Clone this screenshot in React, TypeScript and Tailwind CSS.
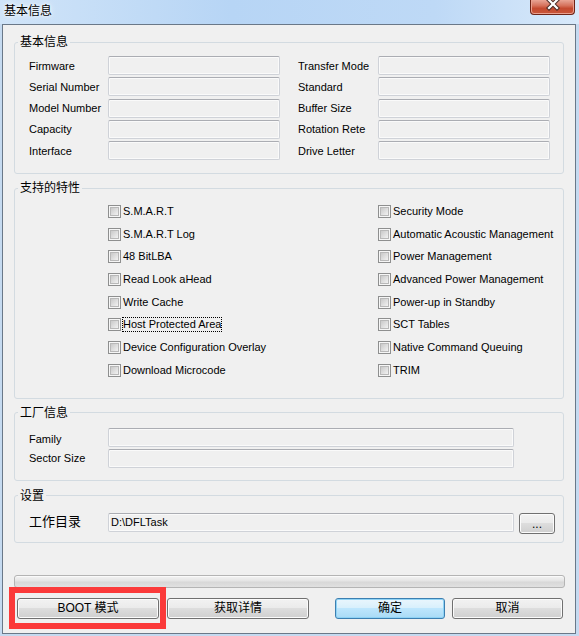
import { ReactNode } from "react";

const leftInfo = ["Firmware", "Serial Number", "Model Number", "Capacity", "Interface"];
const rightInfo = ["Transfer Mode", "Standard", "Buffer Size", "Rotation Rete", "Drive Letter"];

const leftFeatures = [
  "S.M.A.R.T",
  "S.M.A.R.T Log",
  "48 BitLBA",
  "Read Look aHead",
  "Write Cache",
  "Host Protected Area",
  "Device Configuration Overlay",
  "Download Microcode",
];

const rightFeatures = [
  "Security Mode",
  "Automatic Acoustic Management",
  "Power Management",
  "Advanced Power Management",
  "Power-up in Standby",
  "SCT Tables",
  "Native Command Queuing",
  "TRIM",
];

function TextBox({ className = "", value = "" }: { className?: string; value?: string }) {
  return (
    <div
      className={
        "flex h-[19px] items-center rounded-[2px] border border-[#cfd2d8] border-t-[#abadb3] bg-[#f0f0f0] pl-[2px] text-[11px] leading-[13px] shadow-[inset_0_0_0_1px_#fafafa] " +
        className
      }
    >
      {value}
    </div>
  );
}

function CheckItem({ label, focused = false }: { label: string; focused?: boolean }) {
  return (
    <div className="flex h-[13px] items-center">
      <span className="flex h-[13px] w-[13px] shrink-0 items-center justify-center border border-[#8e8f8f] bg-[#f6f6f6]">
        <span className="h-[9px] w-[9px] border border-[#b8b8b8] bg-[linear-gradient(135deg,#c9c9c9,#f2f2f2)]" />
      </span>
      <span
        className={
          "ml-[2px] whitespace-nowrap text-[11px] leading-[13px] " +
          (focused ? "outline-1 outline-dotted outline-black" : "")
        }
      >
        {label}
      </span>
    </div>
  );
}

// Win7 style group box; padding goes on the inner div so the legend stays put
function Group({
  title,
  className = "",
  innerClassName = "",
  children,
}: {
  title: string;
  className?: string;
  innerClassName?: string;
  children: ReactNode;
}) {
  return (
    <fieldset className={"rounded-[3px] border border-[#d3dbe1] p-0 " + className}>
      <legend className="ml-[3px] px-[2px] text-[12px] leading-[16px]">{title}</legend>
      <div className={innerClassName}>{children}</div>
    </fieldset>
  );
}

function WinButton({
  children,
  className = "",
  primary = false,
}: {
  children: ReactNode;
  className?: string;
  primary?: boolean;
}) {
  const look = primary
    ? "border-[#3c7fb1] bg-[linear-gradient(#eaf6fd_0%,#d9f0fc_45%,#bee6fd_50%,#a9dbf6_100%)] shadow-[inset_0_0_0_1px_#8fd3f5]"
    : "border-[#707070] bg-[linear-gradient(#f2f2f2_0%,#ebebeb_45%,#dddddd_50%,#cfcfcf_100%)] shadow-[inset_0_0_0_1px_#fbfbfb]";
  return (
    <button
      type="button"
      className={
        "flex h-[21px] items-center justify-center rounded-[3px] border text-[12px] leading-[14px] text-black " +
        look +
        " " +
        className
      }
    >
      {children}
    </button>
  );
}

function CloseButton() {
  return (
    <div className="mr-[4px] flex h-[15px] w-[45px] items-start justify-center overflow-hidden rounded-b-[4px] border border-t-0 border-[#6e2417] bg-[linear-gradient(#e7a596_0%,#d6725c_40%,#c44a30_60%,#c9563a_100%)] shadow-[inset_0_0_0_1px_#e9a08f]">
      <svg width="16" height="14" viewBox="0 0 16 14" className="-mt-[3px]">
        <path d="M4 3 L12 11 M12 3 L4 11" stroke="#4a2a25" strokeWidth="4.2" strokeLinecap="square" fill="none" />
        <path d="M4 3 L12 11 M12 3 L4 11" stroke="#ffffff" strokeWidth="2.2" strokeLinecap="square" fill="none" />
      </svg>
    </div>
  );
}

export default function App() {
  return (
    <div className="flex h-[636px] w-[579px] flex-col overflow-hidden bg-[#c5daf0] font-['Liberation_Sans','Noto_Sans_CJK_SC',sans-serif] text-black">
      {/* title bar */}
      <div className="flex h-[24px] shrink-0 items-start justify-between bg-[linear-gradient(90deg,#d0e4f8,#b7d5f5_40%,#bed9f6_75%,#d8e9fa)]">
        <span className="ml-[4px] mt-[3px] text-[12px] leading-[16px] [text-shadow:0_0_6px_#fff,0_0_3px_#fff]">
          基本信息
        </span>
        <CloseButton />
      </div>

      {/* client area */}
      <div className="mb-[2px] ml-[2px] mr-[3px] flex flex-1 flex-col border border-[#6a7888] bg-[#f0f0f0] px-[11px] pt-[9px]">
        <Group title="基本信息" innerClassName="pb-[13px] pl-[14px] pt-[6px]">
          <div className="grid grid-cols-[79px_172px_18px_80px_172px] gap-y-[2.25px]">
            {leftInfo.map((label, i) => (
              <div key={label} className="contents">
                <span className="flex h-[19px] items-center pt-[1px] text-[11px] leading-[13px]">{label}</span>
                <TextBox />
                <span />
                <span className="flex h-[19px] items-center pt-[1px] text-[11px] leading-[13px]">{rightInfo[i]}</span>
                <TextBox />
              </div>
            ))}
          </div>
        </Group>

        <Group title="支持的特性" className="mt-[6px]" innerClassName="pb-[21px] pl-[93px] pt-[9px]">
          <div className="grid grid-cols-[270px_1fr] gap-y-[9.7px]">
            {leftFeatures.map((label, i) => (
              <div key={label} className="contents">
                <CheckItem label={label} focused={label === "Host Protected Area"} />
                <CheckItem label={rightFeatures[i]} />
              </div>
            ))}
          </div>
        </Group>

        <Group title="工厂信息" className="mt-[6px]" innerClassName="pb-[12px] pl-[14px] pt-[7px]">
          <div className="flex flex-col gap-[2px]">
            <div className="flex items-center">
              <span className="mt-[4px] w-[79px] text-[11px] leading-[13px]">Family</span>
              <TextBox className="w-[406px]" />
            </div>
            <div className="flex items-center">
              <span className="w-[79px] text-[11px] leading-[13px]">Sector Size</span>
              <TextBox className="w-[406px]" />
            </div>
          </div>
        </Group>

        <Group title="设置" className="mt-[7px]" innerClassName="pb-[8px] pl-[14px] pt-[9px]">
          <div className="flex items-start">
            <span className="flex h-[19px] w-[79px] items-center text-[13px] leading-[16px]">工作目录</span>
            <TextBox className="w-[406px]" value="D:\DFLTask" />
            <WinButton className="ml-[5px] h-[18px] w-[36px] items-end pb-[2px] text-[10px]">...</WinButton>
          </div>
        </Group>

        {/* progress bar */}
        <div className="mr-[-1px] mt-[32px] h-[13px] rounded-[3px] border border-[#b4b4b4] bg-[linear-gradient(#f4f4f4_0%,#e4e4e4_45%,#d8d8d8_55%,#e0e0e0_100%)] shadow-[inset_0_1px_0_#fafafa]" />

        {/* buttons */}
        <div className="mt-[10px] flex">
          <div className="relative ml-[3px]">
            <WinButton className="w-[142px]">BOOT 模式</WinButton>
            <div className="pointer-events-none absolute -bottom-[10px] -left-[8px] -right-[7px] -top-[11px] border-[6px] border-[#fb3a3a]" />
          </div>
          <WinButton className="ml-[8px] w-[142px]">获取详情</WinButton>
          <WinButton primary className="ml-[26px] w-[110px]">
            确定
          </WinButton>
          <WinButton className="ml-[7px] w-[111px]">取消</WinButton>
        </div>
      </div>
    </div>
  );
}
